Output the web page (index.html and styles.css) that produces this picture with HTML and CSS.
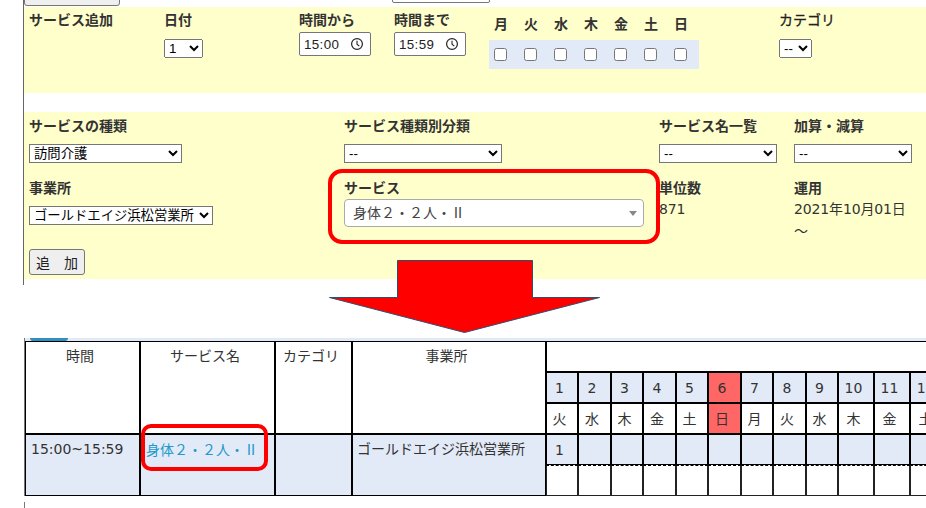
FILE: index.html
```html
<!DOCTYPE html>
<html lang="ja">
<head>
<meta charset="utf-8">
<title>サービス追加</title>
<link rel="stylesheet" href="styles.css">
</head>
<body>
<div class="form-area">
  <div class="top-strip">
    <button class="top-btn" type="button" aria-label="戻る"></button>
    <div class="top-field"></div>
  </div>
  <section class="panel panel-add">
    <div class="c-title"><b class="lbl">サービス追加</b></div>
    <div class="c-date"><b class="lbl">日付</b><select class="sel-date"><option>1</option></select></div>
    <div class="c-time"><b class="lbl">時間から</b>
      <div class="time"><span>15:00</span>
        <svg class="clock" width="14" height="14" viewBox="0 0 14 14" aria-hidden="true"><circle cx="7" cy="7" r="5.4" fill="none" stroke="#222" stroke-width="1.2"/><path d="M7 3.8V7.2L9.3 9.2" fill="none" stroke="#222" stroke-width="1.1"/></svg>
      </div>
    </div>
    <div class="c-time2"><b class="lbl">時間まで</b>
      <div class="time"><span>15:59</span>
        <svg class="clock" width="14" height="14" viewBox="0 0 14 14" aria-hidden="true"><circle cx="7" cy="7" r="5.4" fill="none" stroke="#222" stroke-width="1.2"/><path d="M7 3.8V7.2L9.3 9.2" fill="none" stroke="#222" stroke-width="1.1"/></svg>
      </div>
    </div>
    <div class="c-week">
      <div class="week-labels"><b>月</b><b>火</b><b>水</b><b>木</b><b>金</b><b>土</b><b>日</b></div>
      <div class="week-checks">
        <input type="checkbox"><input type="checkbox"><input type="checkbox"><input type="checkbox"><input type="checkbox"><input type="checkbox"><input type="checkbox">
      </div>
    </div>
    <div class="c-cat"><span class="lbl lbl-medium">カテゴリ</span><select class="sel-cat"><option>--</option></select></div>
  </section>
  <section class="panel panel-service">
    <div class="svc-grid">
      <div><b class="lbl">サービスの種類</b><select class="sel s1"><option>訪問介護</option></select></div>
      <div><b class="lbl">サービス種類別分類</b><select class="sel s2"><option>--</option></select></div>
      <div><b class="lbl">サービス名一覧</b><select class="sel s3"><option>--</option></select></div>
      <div><b class="lbl">加算・減算</b><select class="sel s4"><option>--</option></select></div>
      <div class="row2"><b class="lbl">事業所</b><select class="sel s5"><option>ゴールドエイジ浜松営業所</option></select></div>
      <div class="row2">
        <b class="lbl">サービス</b>
        <div class="combo"><span class="cjk">身体２・２人・<span class="roman">Ⅱ</span></span><i class="combo-arrow"></i></div>
      </div>
      <div class="row2"><b class="lbl">単位数</b><div class="val">871</div></div>
      <div class="row2"><b class="lbl">運用</b><div class="val">2021年10月01日<br>～</div></div>
    </div>
    <button class="add-btn" type="button">追　加</button>
  </section>
</div>

<div class="table-area">
  <div class="tab-strip"><span class="tab"></span></div>
  <table class="plan">
    <colgroup>
      <col class="w1"><col class="w2"><col class="w3"><col class="w4">
      <col class="d32"><col class="d33"><col class="d32"><col class="d33"><col class="d32"><col class="d33"><col class="d32"><col class="d33"><col class="d32"><col class="d36"><col class="d36"><col class="d36">
    </colgroup>
    <tr>
      <th rowspan="3">時間</th><th rowspan="3">サービス名</th><th rowspan="3">カテゴリ</th><th rowspan="3">事業所</th>
      <th colspan="12" class="blank"></th>
    </tr>
    <tr class="days">
      <td>1</td><td>2</td><td>3</td><td>4</td><td>5</td><td class="sun">6</td><td>7</td><td>8</td><td>9</td><td>10</td><td>11</td><td>12</td>
    </tr>
    <tr class="dows">
      <td>火</td><td>水</td><td>木</td><td>金</td><td>土</td><td class="sun">日</td><td>月</td><td>火</td><td>水</td><td>木</td><td>金</td><td>土</td>
    </tr>
    <tr class="plan-row">
      <td rowspan="2" class="info">15:00~15:59</td>
      <td rowspan="2" class="info"><a class="svc-link cjk">身体２・２人・<span class="roman">Ⅱ</span></a></td>
      <td rowspan="2" class="info"></td>
      <td rowspan="2" class="info office">ゴールドエイジ浜松営業所</td>
      <td class="num">1</td><td></td><td></td><td></td><td></td><td></td><td></td><td></td><td></td><td></td><td></td><td></td>
    </tr>
    <tr class="result-row">
      <td></td><td></td><td></td><td></td><td></td><td></td><td></td><td></td><td></td><td></td><td></td><td></td>
    </tr>
  </table>
</div>

<svg class="arrow" width="290" height="90" viewBox="0 0 290 90" aria-hidden="true">
  <path d="M78.5 .5H213.5V37.5H280.5L145.5 72.5L10.5 37.5H78.5Z" fill="#ff0000" stroke="#2f4f6f" stroke-width="1"/>
</svg>
<div class="mark mark-a"></div>
<div class="mark mark-b"></div>
</body>
</html>
```
FILE: styles.css
```css
* { box-sizing: border-box; }
html, body { margin: 0; padding: 0; }
body {
  position: relative;
  width: 926px;
  height: 508px;
  overflow: hidden;
  background: #fff;
  color: #333;
  font: 14px/20px "DejaVu Sans", "Noto Sans CJK JP", sans-serif;
}
select, input, button { font-family: "Liberation Sans", "Noto Sans CJK JP", sans-serif; }
b { font-weight: 700; }
.cjk { font-family: "Noto Sans CJK JP", sans-serif; }
.roman { font-family: "Liberation Serif", "Noto Sans CJK JP", serif; display: inline-block; width: 14px; text-align: center; }

.form-area {
  margin-left: 23px;
  height: 285px;
  border-left: 1px solid #666;
}
.top-strip {
  height: 7px;
  overflow: hidden;
  display: flex;
  position: relative;
}
.top-btn {
  width: 96px;
  height: 26px;
  margin-top: -20px;
  background: #efefef;
  border: 1px solid #767676;
  border-radius: 3px;
}
.top-field {
  width: 98px;
  height: 24px;
  margin: -21px 0 0 272px;
  background: #fff;
  border: 1px solid #767676;
  border-radius: 2px;
}
.panel { background: #ffffcc; }
.lbl { display: block; color: #333; height: 20px; }
.lbl-medium { color: #222; -webkit-text-stroke: .3px #222; }

.panel-add {
  height: 86px;
  display: flex;
  padding: 3px 0 0 5px;
}
.c-title { width: 135px; }
.c-date { width: 135px; }
.c-time { width: 95px; }
.c-time2 { width: 95px; }
.c-week { width: 290px; }
.c-cat { flex: 1; }
.sel-date { display: block; width: 39px; height: 19px; margin-top: 9px; font-size: 13.33px; padding: 0; }
.sel-cat { display: block; width: 33px; height: 19px; margin-top: 9px; font-size: 13.33px; padding: 0; }
.time {
  display: flex;
  align-items: center;
  justify-content: space-between;
  width: 72px;
  height: 24px;
  margin-top: 2px;
  padding: 0 6px 0 4px;
  font: 13.33px "Liberation Sans", sans-serif;
  letter-spacing: .4px;
  color: #222;
  border: 1px solid #767676;
  border-radius: 2px;
  background: #fff;
}
.week-labels { display: flex; width: 210px; margin-top: 4px; height: 20px; padding-left: 5px; }
.week-labels b { flex: none; width: 30px; }
.week-checks {
  display: flex;
  width: 210px;
  height: 29px;
  margin-top: 6px;
  padding: 8px 0 0 5px;
  background: #e3eaf7;
}
.week-checks input { flex: none; width: 13px; height: 13px; margin: 0 17px 0 0; }

.panel-service {
  height: 167px;
  margin-top: 19px;
  padding: 4px 0 0 5px;
}
.svc-grid {
  display: grid;
  grid-template-columns: 315px 315px 135px 1fr;
  grid-template-rows: 60px 73px;
}
.sel {
  display: block;
  height: 19px;
  margin-top: 8px;
  padding: 0;
  font-size: 13.33px;
  line-height: 17px;
  background: #fff;
}
.s1 { width: 153px; }
.s2 { width: 158px; }
.s3 { width: 118px; }
.s4 { width: 118px; }
.s5 { width: 184px; }
.row2 { padding-top: 2px; }
.combo {
  display: flex;
  align-items: center;
  justify-content: space-between;
  width: 300px;
  height: 28px;
  margin-top: 1px;
  padding: 0 8px;
  background: #fff;
  border: 1px solid #aaa;
  border-radius: 4px;
  color: #444;
}
.combo-arrow {
  width: 0;
  height: 0;
  margin-right: -2px;
  border-left: 4px solid transparent;
  border-right: 4px solid transparent;
  border-top: 5px solid #888;
}
.val { line-height: 22px; color: #333; letter-spacing: -.15px; }
.add-btn {
  display: block;
  width: 56px;
  height: 26px;
  padding: 0;
  background: #efefef;
  border: 1px solid #767676;
  border-radius: 3px;
  color: #222;
  font-size: 14px;
  font-family: "Noto Sans CJK JP", sans-serif;
}

.table-area {
  margin: 53px 0 0 24px;
  height: 170px;
  padding-left: 1px;
  background: linear-gradient(#777 0 158px, transparent 158px 164px, #777 164px) left top / 1px 100% no-repeat;
}
.tab-strip {
  height: 3px;
  background: #e3eaf7;
  padding-left: 5px;
}
.tab {
  display: block;
  width: 38px;
  height: 3px;
  background: #2e8fc0;
  border-radius: 0 0 4px 4px;
}
.plan {
  table-layout: fixed;
  border-collapse: separate;
  border-spacing: 0;
  width: 917px;
}
.w1 { width: 115px; }
.w2 { width: 135px; }
.w3 { width: 77px; }
.w4 { width: 194px; }
.d32 { width: 32px; }
.d33 { width: 33px; }
.d36 { width: 36px; }
.plan th, .plan td {
  height: 31px;
  padding: 0;
  border: 1px solid #000;
  font-weight: 400;
  color: #333;
  white-space: nowrap;
  overflow: hidden;
}
.plan th { vertical-align: top; text-align: center; padding: 4px 5px 0 0; }
.plan th.blank { padding: 0; }
.plan .days td { background: #e3eaf7; text-align: center; padding-right: 5px; }
.plan .dows td { text-align: center; padding-right: 5px; }
.plan .days td.sun, .plan .dows td.sun { background: #ff6666; }
.plan .info { background: #e3eaf7; vertical-align: top; padding: 4px 5px 0; }
.plan .office { padding-left: 4px; }
.plan .plan-row td { background: #e3eaf7; }
.plan .num { text-align: center; padding-right: 5px; }
.plan .result-row td { background: #fff; border-color: #222; border-top: 1px dashed #000; }
.svc-link { color: #2199c9; }

.arrow { position: absolute; left: 319px; top: 260px; }
.mark {
  position: absolute;
  border: 4px solid #ff0000;
  background: transparent;
}
.mark-a { left: 328px; top: 169px; width: 332px; height: 75px; border-radius: 14px; }
.mark-b { left: 141px; top: 424px; width: 127px; height: 47px; border-radius: 10px; }
```
